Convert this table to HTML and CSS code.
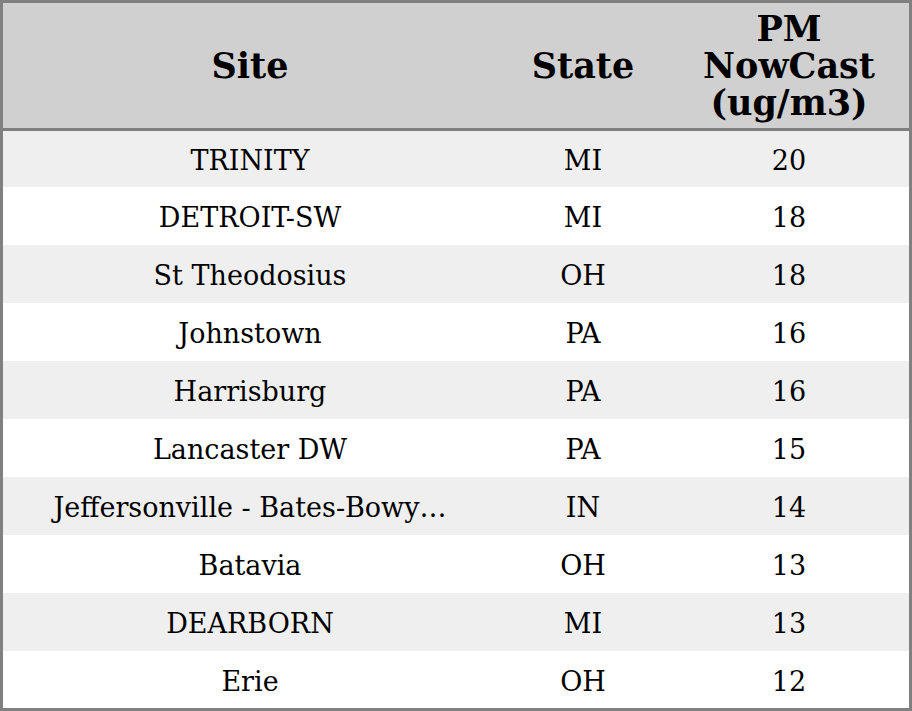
FILE: index.html
```html
<!DOCTYPE html>
<html>
<head>
<meta charset="utf-8">
<link rel="stylesheet" href="styles.css">
</head>
<body>
<table class="grid">
  <thead>
    <tr class="head-row">
      <th class="col-site">Site</th>
      <th class="col-state">State</th>
      <th class="col-pm">PM<br>NowCast<br>(ug/m3)</th>
    </tr>
  </thead>
  <tbody>
    <tr class="row odd first"><td>TRINITY</td><td>MI</td><td>20</td></tr>
    <tr class="row"><td>DETROIT-SW</td><td>MI</td><td>18</td></tr>
    <tr class="row odd"><td>St Theodosius</td><td>OH</td><td>18</td></tr>
    <tr class="row"><td>Johnstown</td><td>PA</td><td>16</td></tr>
    <tr class="row odd"><td>Harrisburg</td><td>PA</td><td>16</td></tr>
    <tr class="row"><td>Lancaster DW</td><td>PA</td><td>15</td></tr>
    <tr class="row odd"><td>Jeffersonville - Bates-Bowy…</td><td>IN</td><td>14</td></tr>
    <tr class="row"><td>Batavia</td><td>OH</td><td>13</td></tr>
    <tr class="row odd"><td>DEARBORN</td><td>MI</td><td>13</td></tr>
    <tr class="row last"><td>Erie</td><td>OH</td><td>12</td></tr>
  </tbody>
</table>
</body>
</html>
```
FILE: styles.css
```css
html, body {
  margin: 0;
  padding: 0;
  background: #ffffff;
}
.grid {
  width: 912px;
  height: 711px;
  border: 3px solid #808080;
  border-collapse: separate;
  border-spacing: 0;
  font-family: "DejaVu Serif", serif;
  color: #000;
  table-layout: fixed;
}
.col-site { width: 494px; }
.col-state { width: 172px; }
.col-pm { width: 240px; }
.grid th {
  background: #d0d0d0;
  font-size: 35px;
  font-weight: bold;
  line-height: 37px;
  height: 125px;
  padding: 0;
  border-bottom: 3px solid #808080;
  text-align: center;
  vertical-align: middle;
}
.grid td {
  font-size: 27px;
  height: 55px;
  padding: 3px 0 0 0;
  text-align: center;
  vertical-align: middle;
  white-space: nowrap;
}
.row.first td {
  height: 53px;
}
.row.last td {
  height: 54px;
}
.row.odd td {
  background: #efefef;
}
```
